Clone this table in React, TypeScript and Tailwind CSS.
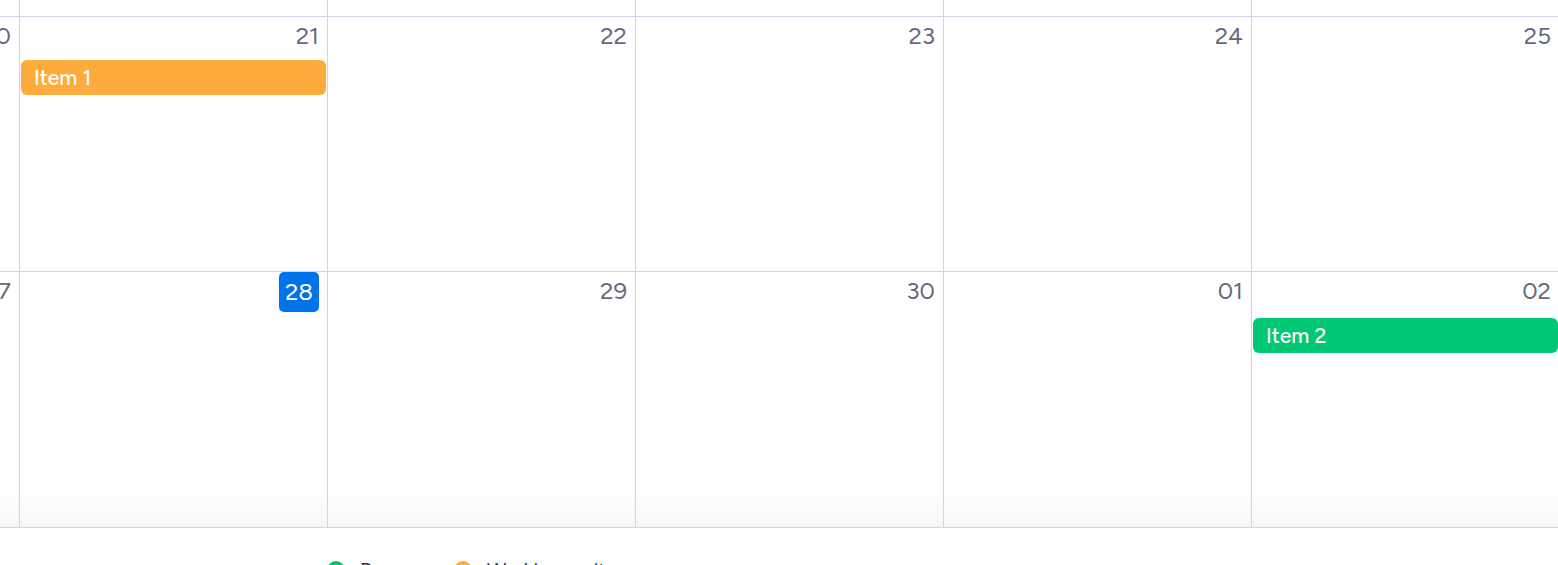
const font = { fontFamily: 'Figtree, Inter, "Noto Sans", sans-serif' }

type Item = { label: string; color: string; offset: string }

type Day = { num: string; today?: boolean; item?: Item }

const WEEKS: Day[][] = [
    [
        { num: '20' },
        { num: '21', item: { label: 'Item 1', color: 'bg-[#fdab3d]', offset: 'mt-[3px]' } },
        { num: '22' },
        { num: '23' },
        { num: '24' },
        { num: '25' },
    ],
    [
        { num: '27' },
        { num: '28', today: true },
        { num: '29' },
        { num: '30' },
        { num: '01' },
        { num: '02', item: { label: 'Item 2', color: 'bg-[#00c875]', offset: 'mt-[6px]' } },
    ],
]

const DayCell = ({ day }: { day: Day }) => {
    return (
        <div className="flex h-full w-[308px] shrink-0 flex-col border-r border-[#d0d4e4]">
            <div className="flex h-10 justify-end pr-2">
                {day.today ? (
                    <span className="flex h-10 w-10 items-center justify-center rounded-[5px] bg-[#0073ea] pb-px text-[24px] text-white">
                        {day.num}
                    </span>
                ) : (
                    <span className="flex h-10 items-center pb-[3px] text-[24px] text-[#676879]">{day.num}</span>
                )}
            </div>
            {day.item && (
                <div
                    className={`${day.item.offset} mx-px flex h-[35px] items-center rounded-[6px] px-[13px] pt-px text-[21px] font-medium text-white ${day.item.color}`}
                >
                    {day.item.label}
                </div>
            )}
        </div>
    )
}

export default function App() {
    return (
        <div className="h-[565px] w-[1558px] overflow-hidden bg-white" style={font}>
            <div className="-ml-[288px] flex h-[17px] border-b border-[#d0d4e4]">
                {[0, 1, 2, 3, 4, 5].map((i) => (
                    <div key={i} className="h-full w-[308px] shrink-0 border-r border-[#d0d4e4]" />
                ))}
            </div>

            <div className="-ml-[288px] flex h-[255px] border-b border-[#d0d4e4]">
                {WEEKS[0].map((d) => (
                    <DayCell key={d.num} day={d} />
                ))}
            </div>

            <div className="-ml-[288px] flex h-[256px] border-b border-[#d0d4e4] bg-linear-to-b from-white from-[85%] to-[#f5f6f8]">
                {WEEKS[1].map((d) => (
                    <DayCell key={d.num} day={d} />
                ))}
            </div>

            <div className="flex items-start pt-[33px] pl-[327px] text-[20px] text-[#323338]">
                <div className="flex w-[127px] items-center gap-[15px]">
                    <span className="h-[18px] w-[18px] shrink-0 rounded-full bg-[#00c875]" />
                    <span className="leading-[18px]">Done</span>
                </div>
                <div className="flex items-center gap-[15px]">
                    <span className="h-[18px] w-[18px] shrink-0 rounded-full bg-[#fdab3d]" />
                    <span className="leading-[18px]">Working on it</span>
                </div>
            </div>
        </div>
    )
}
